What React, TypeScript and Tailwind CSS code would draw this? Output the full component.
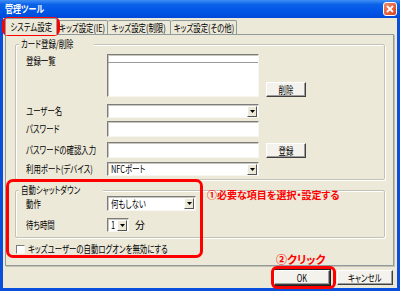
import type { ReactNode } from "react";

const font = "font-['Noto_Sans_CJK_JP','Noto_Sans',sans-serif] [font-feature-settings:'palt']";

// narrow glyphs, like the bitmap UI font in the shot
function T({ children, c = false }: { children: ReactNode; c?: boolean }) {
  return (
    <span className={`inline-block whitespace-nowrap scale-x-[0.74] ${c ? "origin-center" : "origin-left"}`}>{children}</span>
  );
}

function Btn({ children, w, def }: { children: ReactNode; w: string; def?: boolean }) {
  return (
    <div
      className={`${w} h-[15px] flex items-center justify-center text-[10px] leading-none text-black bg-[#f3f2ec] border border-t-white border-l-white border-r-[#404040] border-b-[#404040] shadow-[inset_-1px_-1px_0_#9d9d9d] ${def ? "outline outline-1 outline-[#202020]" : ""}`}
    >
      <T c>{children}</T>
    </div>
  );
}

function Sunken({ className, children }: { className: string; children?: ReactNode }) {
  return (
    <div className={`relative bg-white border border-t-[#7c7c7c] border-l-[#7c7c7c] border-r-[#f7f6f1] border-b-[#f7f6f1] shadow-[inset_1px_1px_0_#c9c7bc] ${className}`}>
      {children}
    </div>
  );
}

function Combo({ className, value }: { className: string; value?: string }) {
  return (
    <Sunken className={`flex items-center ${className}`}>
      <span className="pl-[3px] text-[10px] leading-none text-black">{value && <T>{value}</T>}</span>
      <div className="ml-auto mr-[1px] w-[10px] h-[11px] bg-[#ece9d8] border border-t-white border-l-white border-r-[#555] border-b-[#555] flex items-center justify-center">
        <svg width="5" height="3" viewBox="0 0 5 3"><path d="M0 0h5L2.5 3z" fill="#000" /></svg>
      </div>
    </Sunken>
  );
}

function Label({ children, className = "" }: { children: ReactNode; className?: string }) {
  return (
    <div className={`w-[81px] shrink-0 text-[10px] leading-[12px] text-black ${className}`}>
      <T>{children}</T>
    </div>
  );
}

function Group({ title, className, children }: { title: string; className: string; children: ReactNode }) {
  return (
    <div className={`relative border border-[#c4c2b4] shadow-[1px_1px_0_white,inset_1px_1px_0_white] rounded-[2px] pl-[10px] ${className}`}>
      <span className="absolute -top-[7px] left-[3px] px-[2px] bg-[#ece9d8] text-[10px] leading-[12px] text-black">
        <T>{title}</T>
      </span>
      {children}
    </div>
  );
}

export default function App() {
  const tabs = [
    { name: "キッズ設定(IE)", w: "w-[51px]" },
    { name: "キッズ設定(制限)", w: "w-[63px]" },
    { name: "キッズ設定(その他)", w: "w-[66px]" },
  ];

  return (
    <div className={`relative w-[400px] h-[291px] flex flex-col bg-[#0a4fdc] ${font}`}>
      <div className="h-[18px] flex items-center pl-[5px] pr-[3px] bg-[linear-gradient(180deg,#3f8ff7_0%,#0b62e8_25%,#0055e5_65%,#0049da_100%)]">
        <span className="text-[10px] font-bold text-white leading-none">
          <span className="inline-block origin-left scale-x-[0.8]">管理ツール</span>
        </span>
        <div className="ml-auto w-[14px] h-[14px] rounded-[3px] border border-white bg-[linear-gradient(135deg,#f08a6c,#d9421c)] flex items-center justify-center">
          <svg width="8" height="8" viewBox="0 0 8 8"><path d="M1 1l6 6M7 1L1 7" stroke="#fff" strokeWidth="1.8" /></svg>
        </div>
      </div>

      <div className="flex-1 mx-[3px] mb-[3px] bg-[#ece9d8] flex flex-col">
        <div className="flex items-end h-[16px] pl-[2px]">
          <div className="relative z-10 w-[52px] h-[17px] -mb-[1px] bg-[#ece9d8] border border-b-0 border-[#919b9c] rounded-t-[2px] flex items-center justify-center text-[10px] leading-none text-black">
            <T c>システム設定</T>
          </div>
          {tabs.map((t) => (
            <div key={t.name} className={`${t.w} h-[14px] border-t border-r border-[#919b9c] rounded-t-[2px] flex items-center justify-center text-[10px] leading-none text-black`}>
              <T c>{t.name}</T>
            </div>
          ))}
        </div>

        <div className="ml-[2px] mr-[3px] h-[232px] border border-[#919b9c] shadow-[1px_1px_0_#c3c1b3] pt-[9px] pl-[9px] pr-[8px]">
          <Group title="カード登録/削除" className="h-[136px] pt-[9px]">
            <div className="flex items-start">
              <Label className="mt-[1px]">登録一覧</Label>
              <Sunken className="w-[152px] h-[43px]">
                <div className="h-[8px] border-b border-[#9a9a9a]" />
              </Sunken>
              <div className="ml-[7px] self-end">
                <Btn w="w-[40px]">削除</Btn>
              </div>
            </div>
            <div className="flex items-center mt-[7px]">
              <Label>ユーザー名</Label>
              <Combo className="w-[152px] h-[14px]" />
            </div>
            <div className="flex items-center mt-[3px]">
              <Label>パスワード</Label>
              <Sunken className="w-[152px] h-[16px]" />
            </div>
            <div className="flex items-center mt-[4px]">
              <Label>パスワードの確認入力</Label>
              <Sunken className="w-[152px] h-[16px]" />
              <div className="ml-[7px] mt-[2px]">
                <Btn w="w-[40px]">登録</Btn>
              </div>
            </div>
            <div className="flex items-center mt-[4px]">
              <Label>利用ポート(デバイス)</Label>
              <Combo className="w-[152px] h-[14px]" value="NFCポート" />
            </div>
          </Group>

          <Group title="自動シャットダウン" className="mt-[10px] h-[48px] pt-[5px]">
            <div className="flex items-center">
              <Label>動作</Label>
              <Combo className="w-[89px] h-[15px]" value="何もしない" />
            </div>
            <div className="flex items-center mt-[7px]">
              <Label>待ち時間</Label>
              <Combo className="w-[22px] h-[14px]" value="1" />
              <span className="ml-[6px] text-[10px] leading-none text-black">分</span>
            </div>
          </Group>

          <div className="flex items-center mt-[6px] ml-[1px]">
            <div className="w-[9px] h-[9px] bg-white border border-t-[#7c7c7c] border-l-[#7c7c7c] border-r-[#f7f6f1] border-b-[#f7f6f1]" />
            <span className="ml-[3px] text-[10px] leading-none text-black">
              <T>キッズユーザーの自動ログオンを無効にする</T>
            </span>
          </div>
        </div>

        <div className="flex justify-end gap-[7px] pt-[4px] pr-[4px]">
          <Btn w="w-[56px]" def>OK</Btn>
          <Btn w="w-[56px]">キャンセル</Btn>
        </div>
      </div>

      <div className="absolute left-[2px] top-[17px] w-[58px] h-[19px] border-[3px] border-[#ff0000] rounded-[6px]" />
      <div className="absolute left-[6px] top-[179px] w-[197px] h-[79px] border-[3px] border-[#ff0000] rounded-[7px]" />
      <div className="absolute left-[271px] top-[266px] w-[65px] h-[23px] border-[3px] border-[#ff0000] rounded-[6px]" />
      <span className="absolute left-[207px] top-[189px] text-[10px] font-bold leading-[12px] text-[#ff0000] whitespace-nowrap">
        ①必要な項目を選択・設定する
      </span>
      <span className="absolute left-[276px] top-[253px] text-[11px] font-bold leading-[12px] text-[#ff0000] whitespace-nowrap">
        ②クリック
      </span>
    </div>
  );
}
